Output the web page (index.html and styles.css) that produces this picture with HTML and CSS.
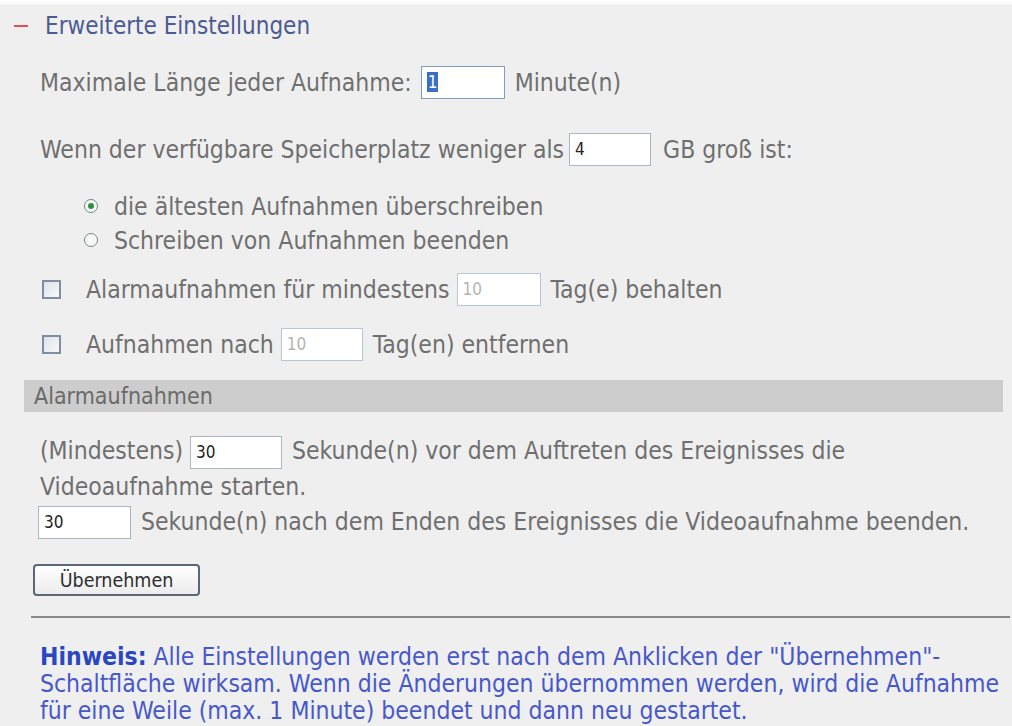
FILE: index.html
```html
<!DOCTYPE html>
<html lang="de">
<head>
<meta charset="utf-8">
<title>Erweiterte Einstellungen</title>
<link rel="stylesheet" href="styles.css">
</head>
<body>
<div class="strip"></div>
<div class="panel">
  <div class="heading"><span class="minus"></span><span class="title">Erweiterte Einstellungen</span></div>

  <div class="row r1">Maximale Länge jeder Aufnahme:<span class="field focus w84"><span class="sel">1</span></span>Minute(n)</div>

  <div class="row r2">Wenn der verfügbare Speicherplatz weniger als<span class="field w82 g5">4</span>GB groß ist:</div>

  <div class="radios">
    <div class="opt"><span class="radio on"></span>die ältesten Aufnahmen überschreiben</div>
    <div class="opt"><span class="radio"></span>Schreiben von Aufnahmen beenden</div>
  </div>

  <div class="row chk c1"><span class="box"></span>Alarmaufnahmen für mindestens<span class="field off w84">10</span>Tag(e) behalten</div>
  <div class="row chk c2"><span class="box"></span>Aufnahmen nach<span class="field off w82">10</span>Tag(en) entfernen</div>

  <div class="bar">Alarmaufnahmen</div>

  <div class="para">(Mindestens)<span class="field w92">30</span>Sekunde(n) vor dem Auftreten des Ereignisses die<br>Videoaufnahme starten.<br><span class="field w93 first">30</span>Sekunde(n) nach dem Enden des Ereignisses die Videoaufnahme beenden.</div>

  <button class="btn" type="button">Übernehmen</button>

  <div class="rule"></div>

  <p class="note"><b>Hinweis:</b> Alle Einstellungen werden erst nach dem Anklicken der "Übernehmen"-<br>Schaltfläche wirksam. Wenn die Änderungen übernommen werden, wird die Aufnahme<br>für eine Weile (max. 1 Minute) beendet und dann neu gestartet.</p>
</div>
</body>
</html>
```
FILE: styles.css
```css
html, body {
  margin: 0;
  padding: 0;
}
body {
  width: 1012px;
  height: 726px;
  overflow: hidden;
  background: #efefef;
  font-family: "DejaVu Sans Condensed", "DejaVu Sans", sans-serif;
  font-stretch: condensed;
  font-size: 24.5px;
  color: #6f6f6f;
}
.strip {
  height: 5px;
  background: linear-gradient(#ffffff, #f6f6f6);
}
.panel {
  padding-right: 9px;
}
.heading {
  height: 42px;
  display: flex;
  align-items: center;
}
.minus {
  display: block;
  width: 14px;
  height: 2px;
  margin-left: 14px;
  background: #d9534f;
}
.title {
  margin-left: 17px;
  font-size: 24px;
  color: #4c5a93;
}
.row {
  height: 34px;
  display: flex;
  align-items: center;
  padding-left: 40px;
  white-space: nowrap;
}
.r1 { margin-top: 18px; }
.r2 { margin-top: 33px; }
.field {
  display: inline-flex;
  align-items: center;
  box-sizing: border-box;
  height: 33px;
  padding-left: 5px;
  background: #ffffff;
  border: 1px solid #a9b6c6;
  font-size: 17px;
  color: #222;
  margin: 0 10px 0 9px;
  vertical-align: middle;
}
.field.focus { border-color: #7f9cc2; }
.field.off { color: #b3b3b3; border-color: #b9c6d6; }
.w82 { width: 82px; }
.w84 { width: 84px; }
.w92 { width: 92px; }
.w93 { width: 93px; }
.g5 { margin-left: 5px; margin-right: 12px; }
.sel {
  background: #3a6fc4;
  color: #fff;
  padding: 0 1px;
  line-height: 20px;
}
.radios {
  margin-top: 23px;
  padding-left: 84px;
}
.opt {
  height: 34px;
  display: flex;
  align-items: center;
  white-space: nowrap;
}
.radio {
  box-sizing: border-box;
  width: 14px;
  height: 14px;
  border: 1px solid #6d8a82;
  border-radius: 50%;
  background: #f8f8f8;
  margin-right: 16px;
  display: flex;
  align-items: center;
  justify-content: center;
}
.radio.on::after {
  content: "";
  width: 6px;
  height: 6px;
  border-radius: 50%;
  background: #2f8f43;
}
.chk { padding-left: 42px; }
.box {
  box-sizing: border-box;
  width: 19px;
  height: 19px;
  border: 2px solid #7f8ea3;
  background: linear-gradient(135deg, #dfe3e8, #f7f8fa);
  margin-right: 25px;
  flex: none;
}
.c1 { margin-top: 15px; }
.c2 { margin-top: 21px; }
.c1 .field { margin-left: 7px; }
.c2 .field { margin-left: 7px; }
.bar {
  margin-top: 19px;
  margin-left: 24px;
  height: 32px;
  line-height: 32px;
  padding-left: 10px;
  background: #cdcdcd;
  font-size: 23px;
  color: #6a6a6a;
}
.para {
  margin-top: 21px;
  padding-left: 40px;
  line-height: 35px;
  white-space: nowrap;
}
.para .field {
  height: 33px;
  margin: 0 10px 0 7px;
  vertical-align: middle;
  line-height: 31px;
}
.para .field.first { margin-left: -2px; }
.btn {
  display: block;
  margin-top: 25px;
  margin-left: 33px;
  width: 167px;
  height: 32px;
  padding: 0;
  border: 2px solid #5b6679;
  border-radius: 4px;
  background: linear-gradient(#ffffff, #ececec);
  font-family: "DejaVu Sans Condensed", "DejaVu Sans", sans-serif;
  font-stretch: condensed;
  font-size: 19.5px;
  color: #2e2e2e;
}
.rule {
  margin-top: 20px;
  margin-left: 31px;
  margin-right: -7px;
  height: 2px;
  background: #8a8a8a;
}
.note {
  margin: 25px 0 0 0;
  padding-left: 40px;
  font-size: 24.5px;
  line-height: 27px;
  color: #4758c9;
  white-space: nowrap;
}
.note b {
  color: #2a47bf;
}
```
